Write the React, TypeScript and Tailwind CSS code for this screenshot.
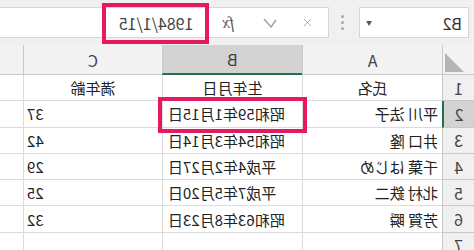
import { X } from "lucide-react";

const rows = [
  { n: "1", a: "氏名", b: "生年月日", c: "満年齢", head: true },
  { n: "2", a: "平川 法子", b: "昭和59年1月15日", c: "37" },
  { n: "3", a: "井口 隆", b: "昭和54年3月14日", c: "42" },
  { n: "4", a: "千葉 はじめ", b: "平成4年2月27日", c: "29" },
  { n: "5", a: "北村 鉄二", b: "平成7年5月20日", c: "25" },
  { n: "6", a: "芳賀 瞬", b: "昭和63年8月23日", c: "32" },
  { n: "7", a: "", b: "", c: "" },
];

export default function App() {
  return (
    <div className="relative h-[250px] w-[474px] -scale-x-100 overflow-hidden bg-white font-['Noto_Sans_CJK_JP','Liberation_Sans',sans-serif] text-[#222]">
      {/* formula bar */}
      <div className="flex h-[45px] items-center bg-[#f0f0f0]">
        <div className="ml-[5px] flex h-[31px] w-[110px] items-center justify-between border border-[#d6d6d6] bg-white pl-[6px] pr-[6px]">
          <span className="text-[16px] leading-none text-[#333]">B2</span>
          <span className="text-[6px] leading-none text-[#555]">▼</span>
        </div>
        <div className="ml-[15px] flex flex-col gap-[3px]">
          <span className="size-[3px] rounded-full bg-[#a8a8a8]" />
          <span className="size-[3px] rounded-full bg-[#a8a8a8]" />
          <span className="size-[3px] rounded-full bg-[#a8a8a8]" />
        </div>
        <div className="ml-[12px] flex h-[31px] flex-1 items-center border-y border-l border-[#d6d6d6] bg-white">
          <X className="ml-[14px] size-[13px] text-[#a0a0a0]" strokeWidth={1.6} />
          <svg className="ml-[23px]" width="16" height="12" viewBox="0 0 16 12">
            <polyline points="2,3 7,10 14,2" fill="none" stroke="#a8a8a8" strokeWidth="1.6" />
          </svg>
          <span className="ml-[28px] font-['Liberation_Serif',serif] text-[16px] italic leading-none text-[#555]">fx</span>
          <span className="ml-[29px] text-[16px] leading-none text-[#444]">1984/1/15</span>
        </div>
      </div>
      <div className="pointer-events-none absolute left-[265px] top-[3px] h-[41px] w-[107px] border-[4px] border-[#e5195f]" />

      {/* column headers */}
      <div className="grid h-[30px] grid-cols-[32px_140px_140px_139px_23px] bg-[#f3f3f3] text-[16px] text-[#444]">
        <div className="relative border-r border-b border-[#c8c8c8]">
          <svg className="absolute bottom-[2px] right-[2px]" width="19" height="19" viewBox="0 0 19 19">
            <polygon points="19,0 19,19 0,19" fill="#b5b5b5" />
          </svg>
        </div>
        <div className="flex items-center justify-center border-r border-b border-[#c8c8c8]">A</div>
        <div className="flex items-center justify-center border-r border-b-2 border-[#c8c8c8] border-b-[#217346] bg-[#d3d3d3]">B</div>
        <div className="flex items-center justify-center border-r border-b border-[#c8c8c8]">C</div>
        <div className="border-b border-[#c8c8c8]" />
      </div>

      {/* rows */}
      {rows.map((r) => (
        <div key={r.n} className="grid h-[26.3px] grid-cols-[32px_140px_140px_139px_23px] text-[15px] leading-none">
          <div
            className={
              r.n === "2"
                ? "flex items-center justify-center border-r-2 border-b border-[#c8c8c8] border-r-[#217346] bg-[#d3d3d3] text-[16px] text-[#444]"
                : "flex items-center justify-center border-r border-b border-[#c8c8c8] bg-[#f0f0f0] text-[16px] text-[#444]"
            }
          >
            {r.n}
          </div>
          <div className={r.head ? "flex items-center justify-center border-r border-b border-[#dcdcdc]" : "flex items-center border-r border-b border-[#dcdcdc] pl-[4px]"}>
            {r.a}
          </div>
          <div className={r.head ? "flex items-center justify-center border-r border-b border-[#dcdcdc]" : "flex items-center justify-end border-r border-b border-[#dcdcdc] pr-[5px]"}>
            {r.b}
          </div>
          <div className={r.head ? "flex items-center justify-center border-r border-b border-[#dcdcdc]" : "flex items-center justify-end border-r border-b border-[#dcdcdc] pr-[3px]"}>
            {r.c}
          </div>
          <div className="border-b border-[#dcdcdc]" />
        </div>
      ))}

      <div className="pointer-events-none absolute left-[167px] top-[97px] h-[36px] w-[149px] border-[4px] border-[#e5195f]" />
    </div>
  );
}
